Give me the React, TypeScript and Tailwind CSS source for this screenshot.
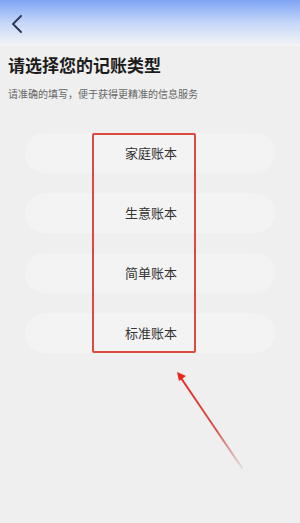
const TYPES = ["家庭账本", "生意账本", "简单账本", "标准账本"];

export default function App() {
  return (
    <div
      className="relative w-[300px] h-[523px] overflow-hidden bg-[#efefef] text-[#222]"
      style={{ fontFamily: '"Noto Sans CJK SC", "Noto Sans", sans-serif' }}
    >
      <div className="h-[46px] bg-gradient-to-b from-[#7ea4f4] via-[#c6d7f8] to-[#f3f4f6] flex items-center pl-[10px] pt-[2px]">
        <svg width="14" height="20" viewBox="0 0 14 20" fill="none">
          <path d="M11 2 L3 10 L11 18" stroke="#2c3a58" strokeWidth="2" strokeLinecap="round" strokeLinejoin="round" />
        </svg>
      </div>

      <div className="px-[8px] pt-[7px]">
        <div className="text-[17px] font-bold leading-[24px] text-[#1c1c1c]">请选择您的记账类型</div>
        <div className="mt-[10px] text-[10px] leading-[14px] text-[#666]">请准确的填写，便于获得更精准的信息服务</div>
      </div>

      <div className="mt-[32px] flex flex-col gap-[20px] px-[25px]">
        {TYPES.map((t) => (
          <div key={t} className="h-[40px] rounded-full bg-[#f3f3f3] flex items-center justify-center pl-[2px] text-[13px] text-[#333]">
            {t}
          </div>
        ))}
      </div>

      <div className="absolute left-[92px] top-[133px] w-[104px] h-[220px] border-2 border-[#dd4a40] rounded-[2px]" />

      <svg className="absolute left-0 top-0" width="300" height="523" viewBox="0 0 300 523">
        <defs>
          <linearGradient id="ar" x1="178" y1="373" x2="242" y2="468" gradientUnits="userSpaceOnUse">
            <stop offset="0" stopColor="#e8261c" />
            <stop offset="0.6" stopColor="#d8564f" />
            <stop offset="1" stopColor="#e4dcdc" />
          </linearGradient>
        </defs>
        <path d="M181 378 L242 468" stroke="url(#ar)" strokeWidth="2" strokeLinecap="round" />
        <path d="M177 372 L186 376 L179 381 Z" fill="#e8261c" />
      </svg>
    </div>
  );
}
